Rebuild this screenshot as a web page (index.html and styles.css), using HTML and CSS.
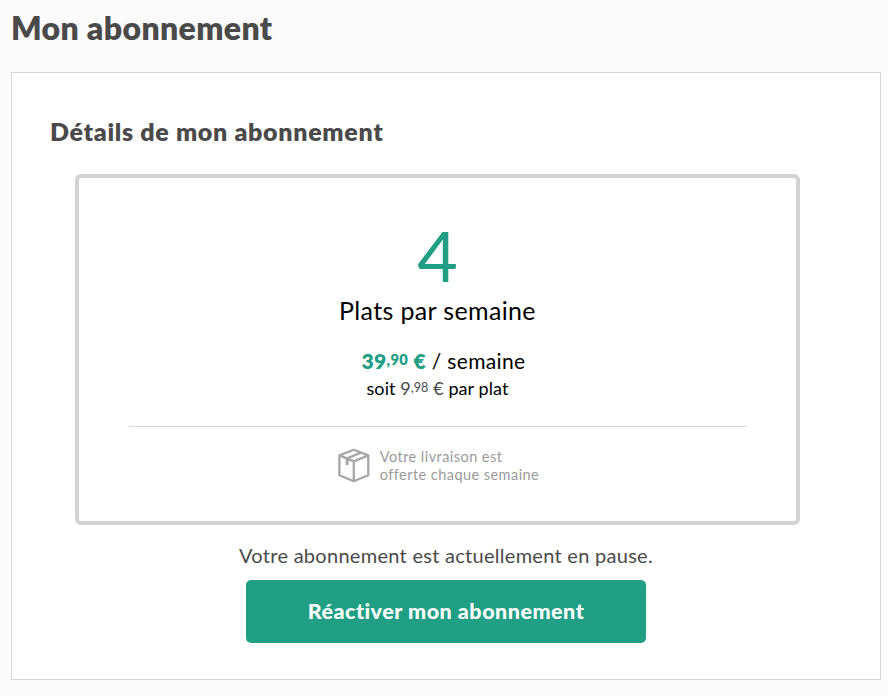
FILE: index.html
```html
<!DOCTYPE html>
<html lang="fr">
<head>
    <meta charset="UTF-8">
    <meta name="viewport" content="width=device-width, initial-scale=1.0">
    <title>Mon abonnement</title>
    <link rel="stylesheet" href="styles.css">
</head>
<body>

    <h1>Mon abonnement</h1>

    <main class="panel">
        <h2>Détails de mon abonnement</h2>

        <div class="plan">
            <div class="plan-count">4</div>
            <div class="plan-label">Plats par semaine</div>
            <div class="plan-price"><strong>39<span class="cents">,90</span> €</strong> / semaine</div>
            <div class="plan-unit">soit <span class="unit-price">9<span class="cents">,98</span> €</span> par plat</div>

            <div class="delivery">
                <svg class="box-icon" width="32" height="35" viewBox="0 0 32 35" fill="none" stroke="#a6a6a6" stroke-width="2.3" stroke-linejoin="round">
                    <path d="M15.8 1.7 L30.3 7.4 V27.2 L15.8 33.3 L1.4 27.2 V7.4 Z"/>
                    <path d="M1.4 7.4 L15.8 13.4 L30.3 7.4 M15.8 13.4 V33.3"/>
                    <path d="M23 4.6 L9.2 10.4"/>
                    <path d="M9.2 10 V17" stroke-width="3"/>
                </svg>
                <p class="delivery-text">Votre livraison est<br>offerte chaque semaine</p>
            </div>
        </div>

        <p class="status">Votre abonnement est actuellement en pause.</p>
        <button class="reactivate">Réactiver mon abonnement</button>
    </main>

</body>
</html>
```
FILE: styles.css
```css
* {
    box-sizing: border-box;
}
body {
    font-family: Lato, "Open Sans", sans-serif;
    background-color: #fbfbfb;
    color: #4a4a4a;
    margin: 0;
    padding: 8px 7px 16px 11px;
}
h1 {
    margin: 0 0 24px;
    font-size: 32px;
    font-weight: 800;
    line-height: 40px;
    letter-spacing: 0.35px;
}
h2 {
    margin: 0 0 25px 38px;
    font-size: 25px;
    font-weight: 800;
    line-height: 36px;
    letter-spacing: 0.68px;
}
.panel {
    width: 870px;
    height: 608px;
    padding-top: 40px;
    background-color: #fff;
    border: 1px solid #d6d6d6;
}
.plan {
    width: 725px;
    height: 351px;
    margin-left: 63px;
    padding: 40px 50px 0;
    border: 4px solid #d3d3d3;
    border-radius: 6px;
    text-align: center;
    color: #000;
}
.plan-count {
    font-size: 70px;
    line-height: 74px;
    color: #209f85;
}
.plan-label {
    font-size: 25px;
    line-height: 36px;
    letter-spacing: 0.35px;
}
.plan-price {
    margin-top: 19px;
    padding-left: 12px;
    font-size: 21px;
    line-height: 28px;
    letter-spacing: 0.36px;
}
.plan-price strong {
    font-weight: 800;
    color: #209f85;
}
.cents {
    font-size: 0.7em;
    vertical-align: 0.25em;
    line-height: 1;
}
.plan-unit {
    font-size: 18px;
    line-height: 26px;
    letter-spacing: 0.08px;
}
.unit-price {
    color: #4a4a4a;
}
.delivery {
    display: flex;
    justify-content: center;
    gap: 10px;
    margin-top: 25px;
    padding: 21px 0 0 2px;
    border-top: 1px solid #d6d6d6;
    color: #9b9b9b;
}
.delivery-text {
    margin: 0;
    font-size: 14.5px;
    line-height: 18px;
    letter-spacing: 0.45px;
    text-align: left;
}
.status {
    margin: 16px 0 11px;
    font-size: 20px;
    line-height: 28px;
    letter-spacing: 0.28px;
    text-align: center;
}
.reactivate {
    display: block;
    width: 400px;
    height: 63px;
    margin: 0 auto;
    padding: 0 0 2px;
    border: none;
    border-radius: 5px;
    background-color: #209f85;
    color: #fff;
    font-family: inherit;
    font-size: 21.5px;
    font-weight: 900;
    letter-spacing: 0.5px;
    cursor: pointer;
}
```
